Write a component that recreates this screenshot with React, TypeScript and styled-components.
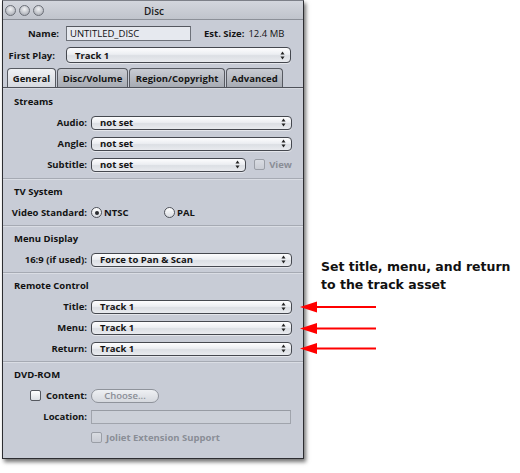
import React from "react";
import styled, { createGlobalStyle } from "styled-components";

const Global = createGlobalStyle`
  html, body { margin: 0; padding: 0; background: #ffffff; }
  body { width: 520px; height: 473px; overflow: hidden; font-family: "Open Sans", "DejaVu Sans", sans-serif; }
`;

const Page = styled.div`
  position: relative;
  display: flex;
  align-items: flex-start;
  width: 520px;
  height: 473px;
`;

const Window = styled.div`
  box-sizing: border-box;
  margin-left: 2px;
  width: 302px;
  height: 459px;
  border: 1px solid #2c2d31;
  border-top-color: #7d8088;
  background: #c8ccd6;
  box-shadow: 2px 3px 4px rgba(0, 0, 0, 0.55);
  display: flex;
  flex-direction: column;
  font-size: 9.5px;
  font-weight: 700;
  color: #141414;
`;

const TitleBar = styled.div`
  box-sizing: border-box;
  height: 19px;
  display: grid;
  grid-template-columns: 1fr auto 1fr;
  align-items: center;
  padding-left: 2px;
  background: linear-gradient(#d3d6dd, #c0c4cc);
  border-bottom: 1px solid #8c9098;
`;

const Lights = styled.div`
  display: flex;
  gap: 3px;
`;

const Light = styled.span`
  width: 11px;
  height: 11px;
  box-sizing: border-box;
  border-radius: 50%;
  border: 1px solid #6c7078;
  background: radial-gradient(circle at 50% 35%, #f2f3f5 0%, #c3c6cc 55%, #9a9ea6 100%);
`;

const Title = styled.div`
  font-weight: 600;
  font-size: 10px;
  color: #1c1c1c;
  padding-top: 1px;
`;

const Header = styled.div`
  display: flex;
  flex-direction: column;
  padding-top: 6px;
  gap: 6px;
`;

const HeadRow = styled.div<{ $h: number }>`
  display: flex;
  align-items: center;
  height: ${(p) => p.$h}px;
`;

const HeadLabel = styled.div<{ $w: number; $gap: number }>`
  width: ${(p) => p.$w}px;
  margin-right: ${(p) => p.$gap}px;
  text-align: right;
  white-space: nowrap;
`;

const TextField = styled.div<{ $w: number; $h?: number; $disabled?: boolean }>`
  box-sizing: border-box;
  width: ${(p) => p.$w}px;
  height: ${(p) => (p.$h ? `${p.$h}px` : "100%")};
  display: flex;
  align-items: center;
  padding-left: 3px;
  font-weight: 400;
  color: #111;
  border: 1px solid ${(p) => (p.$disabled ? "#a0a4ac" : "#6e727a")};
  border-top-color: ${(p) => (p.$disabled ? "#979ba3" : "#555860")};
  background: ${(p) => (p.$disabled ? "#ccd0d8" : "#e6e9ef")};
`;

const EstSize = styled.div`
  margin-left: 13px;
  white-space: nowrap;
  span { font-weight: 400; margin-left: 4px; }
`;

const Popup = styled.div<{ $h: number; $w?: number }>`
  box-sizing: border-box;
  height: ${(p) => p.$h}px;
  ${(p) => (p.$w ? `width: ${p.$w}px;` : "flex: 1;")}
  display: flex;
  align-items: center;
  justify-content: space-between;
  padding: 0 5px 0 8px;
  border: 1px solid #45484f;
  border-radius: 4px;
  background: linear-gradient(#fdfdfe 0%, #eceef2 45%, #dcdfe4 55%, #e9ebef 100%);
  box-shadow: 0 1px 0 rgba(255, 255, 255, 0.5);
  white-space: nowrap;
`;

const Stepper = () => (
  <svg width="5" height="9" viewBox="0 0 5 9">
    <path d="M2.5 0.5 L4.5 3.5 L0.5 3.5 Z" fill="#222" />
    <path d="M2.5 8.5 L4.5 5.5 L0.5 5.5 Z" fill="#222" />
  </svg>
);

const PopupMenu = ({ value, h = 14, w }: { value: string; h?: number; w?: number }) => (
  <Popup $h={h} $w={w}>
    <span>{value}</span>
    <Stepper />
  </Popup>
);

const TabStrip = styled.div`
  display: flex;
  gap: 1px;
  height: 19px;
  padding-left: 4px;
  margin-top: -1px;
  align-items: flex-end;
`;

const Tab = styled.div<{ $w: number; $active?: boolean }>`
  box-sizing: border-box;
  width: ${(p) => p.$w}px;
  height: 19px;
  display: flex;
  align-items: center;
  justify-content: center;
  border: 1px solid #575a61;
  border-bottom: none;
  border-radius: 4px 4px 0 0;
  background: ${(p) =>
    p.$active
      ? "linear-gradient(#f0f1f4, #d6d9df)"
      : "linear-gradient(#c9ccd3, #a7abb3)"};
  color: #151515;
  white-space: nowrap;
`;

const Section = styled.div<{ $first?: boolean; $grow?: boolean }>`
  display: flex;
  flex-direction: column;
  padding: ${(p) => (p.$first ? "3px 0 3px" : "2px 0 2px")};
  border-top: 1px solid ${(p) => (p.$first ? "#4f525a" : "#a6aab3")};
  box-shadow: inset 0 1px 0 ${(p) => (p.$first ? "#d6d9e0" : "#dadde4")};
  ${(p) => (p.$grow ? "flex: 1;" : "")}
`;

const SectionTitle = styled.div`
  height: 21px;
  line-height: 21px;
  padding-left: 11px;
  color: #111;
`;

const Row = styled.div`
  display: grid;
  grid-template-columns: 84px 201px;
  column-gap: 4px;
  align-items: center;
  height: 21px;
`;

const Label = styled.div`
  display: flex;
  align-items: center;
  justify-content: flex-end;
  gap: 5px;
  white-space: nowrap;
`;

const Control = styled.div`
  display: flex;
  align-items: center;
  gap: 8px;
`;

const Check = styled.span<{ $disabled?: boolean }>`
  box-sizing: border-box;
  width: 11px;
  height: 11px;
  border-radius: 2px;
  border: 1px solid ${(p) => (p.$disabled ? "#9a9ea6" : "#55585f")};
  background: ${(p) =>
    p.$disabled ? "linear-gradient(#d9dce2, #c9ccd4)" : "linear-gradient(#ffffff, #dcdfe4)"};
`;

const Dim = styled.span`
  color: #8a8e96;
  display: flex;
  align-items: center;
  gap: 4px;
`;

const RadioGroup = styled.div`
  display: flex;
  align-items: center;
`;

const RadioItem = styled.label<{ $w: number }>`
  display: flex;
  align-items: center;
  gap: 2px;
  width: ${(p) => p.$w}px;
`;

const RadioDot = styled.span<{ $on?: boolean }>`
  box-sizing: border-box;
  width: 11px;
  height: 11px;
  border-radius: 50%;
  border: 1px solid #4f525a;
  background: linear-gradient(#ffffff, #d9dce2);
  display: flex;
  align-items: center;
  justify-content: center;
  &::after {
    content: "";
    width: 4px;
    height: 4px;
    border-radius: 50%;
    background: ${(p) => (p.$on ? "#2a2c30" : "transparent")};
  }
`;

const PillButton = styled.div`
  box-sizing: border-box;
  width: 68px;
  height: 14px;
  border-radius: 7px;
  border: 1px solid #8f939b;
  background: linear-gradient(#eef0f3, #d5d8de);
  color: #8a8e96;
  font-weight: 600;
  display: flex;
  align-items: center;
  justify-content: center;
`;

const Note = styled.div`
  margin-top: 258px;
  margin-left: 17px;
  font-family: "DejaVu Sans", sans-serif;
  font-weight: 700;
  font-size: 12.5px;
  line-height: 18px;
  color: #111;
  white-space: nowrap;
`;

const Arrows = styled.svg`
  position: absolute;
  left: 299px;
  top: 298px;
`;

const Arrow = ({ y }: { y: number }) => (
  <g>
    <line x1="14" y1={y} x2="77" y2={y} stroke="#ff0000" strokeWidth="2" />
    <path d={`M1 ${y} L18 ${y - 5.5} L18 ${y + 5.5} Z`} fill="#ff0000" />
  </g>
);

export default function App() {
  return (
    <>
      <Global />
      <Page>
        <Window>
          <TitleBar>
            <Lights>
              <Light />
              <Light />
              <Light />
            </Lights>
            <Title>Disc</Title>
            <span />
          </TitleBar>
          <Header>
            <HeadRow $h={15}>
              <HeadLabel $w={56} $gap={7}>Name:</HeadLabel>
              <TextField $w={125}>UNTITLED_DISC</TextField>
              <EstSize>
                Est. Size:<span>12.4 MB</span>
              </EstSize>
            </HeadRow>
            <HeadRow $h={16}>
              <HeadLabel $w={52} $gap={11}>First Play:</HeadLabel>
              <PopupMenu value="Track 1" h={16} w={225} />
            </HeadRow>
            <TabStrip>
              <Tab $w={49} $active>General</Tab>
              <Tab $w={71}>Disc/Volume</Tab>
              <Tab $w={96}>Region/Copyright</Tab>
              <Tab $w={57}>Advanced</Tab>
            </TabStrip>
          </Header>

          <Section $first>
            <SectionTitle>Streams</SectionTitle>
            <Row>
              <Label>Audio:</Label>
              <Control><PopupMenu value="not set" /></Control>
            </Row>
            <Row>
              <Label>Angle:</Label>
              <Control><PopupMenu value="not set" /></Control>
            </Row>
            <Row>
              <Label>Subtitle:</Label>
              <Control>
                <PopupMenu value="not set" w={157} />
                <Dim>
                  <Check $disabled />
                  View
                </Dim>
              </Control>
            </Row>
          </Section>

          <Section>
            <SectionTitle>TV System</SectionTitle>
            <Row>
              <Label>Video Standard:</Label>
              <RadioGroup>
                <RadioItem $w={73}>
                  <RadioDot $on />
                  NTSC
                </RadioItem>
                <RadioItem $w={50}>
                  <RadioDot />
                  PAL
                </RadioItem>
              </RadioGroup>
            </Row>
          </Section>

          <Section>
            <SectionTitle>Menu Display</SectionTitle>
            <Row>
              <Label>16:9 (if used):</Label>
              <Control><PopupMenu value="Force to Pan &amp; Scan" /></Control>
            </Row>
          </Section>

          <Section>
            <SectionTitle>Remote Control</SectionTitle>
            <Row>
              <Label>Title:</Label>
              <Control><PopupMenu value="Track 1" /></Control>
            </Row>
            <Row>
              <Label>Menu:</Label>
              <Control><PopupMenu value="Track 1" /></Control>
            </Row>
            <Row>
              <Label>Return:</Label>
              <Control><PopupMenu value="Track 1" /></Control>
            </Row>
          </Section>

          <Section $grow>
            <SectionTitle>DVD-ROM</SectionTitle>
            <Row>
              <Label>
                <Check />
                Content:
              </Label>
              <Control><PillButton>Choose...</PillButton></Control>
            </Row>
            <Row>
              <Label>Location:</Label>
              <Control>
                <TextField $w={200} $h={14} $disabled />
              </Control>
            </Row>
            <Row>
              <span />
              <Dim>
                <Check $disabled />
                Joliet Extension Support
              </Dim>
            </Row>
          </Section>
        </Window>

        <Note>
          Set title, menu, and return
          <br />
          to the track asset
        </Note>

        <Arrows width="80" height="62" viewBox="0 0 80 62">
          <Arrow y={9} />
          <Arrow y={30.5} />
          <Arrow y={50.5} />
        </Arrows>
      </Page>
    </>
  );
}
